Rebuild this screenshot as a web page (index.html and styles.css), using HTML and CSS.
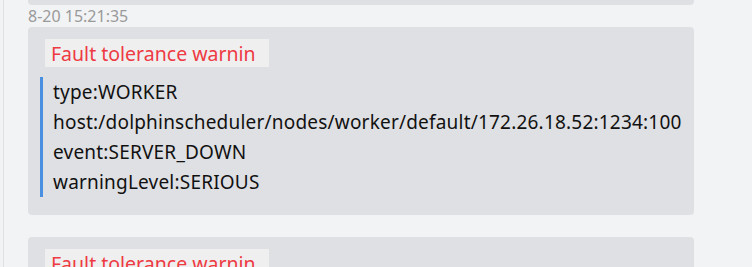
FILE: index.html
```html
<!DOCTYPE html>
<html>
<head>
<meta charset="utf-8">
<link rel="stylesheet" href="styles.css">
</head>
<body>
<div class="page">
  <div class="column">
    <div class="card card-prev"></div>
    <div class="time">8-20 15:21:35</div>
    <div class="card">
      <div class="title">Fault tolerance warnin</div>
      <div class="quote">
        <div class="line">type:WORKER</div>
        <div class="line">host:/dolphinscheduler/nodes/worker/default/172.26.18.52:1234:100</div>
        <div class="line">event:SERVER_DOWN</div>
        <div class="line">warningLevel:SERIOUS</div>
      </div>
    </div>
    <div class="card card-next">
      <div class="title">Fault tolerance warnin</div>
    </div>
  </div>
</div>
</body>
</html>
```
FILE: styles.css
```css
html, body {
  margin: 0;
  padding: 0;
  background: #f2f3f5;
  height: 100%;
  overflow: hidden;
}
.page {
  padding-left: 3px;
  height: 100%;
  font-family: "Noto Sans", "Liberation Sans", sans-serif;
}
.column {
  border-left: 1px solid #dfe0e3;
  height: 100%;
  padding-left: 24px;
  width: 666px;
}
.card {
  background: #dfe0e3;
  border-radius: 4px;
  padding: 12px 17px 18px 12px;
}
.card-prev {
  height: 5px;
  padding: 0;
  border-radius: 0 0 4px 4px;
}
.card-next {
  margin-top: 22px;
  height: 60px;
}
.time {
  height: 22px;
  line-height: 22px;
  font-size: 16px;
  color: #9a9a9a;
}
.title {
  display: inline-block;
  margin-left: 5px;
  width: 212px;
  height: 28px;
  padding-left: 6px;
  padding-right: 6px;
  background: #efeff0;
  color: #ee3a43;
  font-size: 19.5px;
  line-height: 30px;
  white-space: nowrap;
  overflow: hidden;
  vertical-align: top;
}
.quote {
  margin-top: 10px;
  border-left: 3px solid #4a8fe0;
  padding-left: 10px;
}
.line {
  font-size: 19px;
  letter-spacing: 0.2px;
  line-height: 30px;
  color: #111;
  white-space: nowrap;
}
```
